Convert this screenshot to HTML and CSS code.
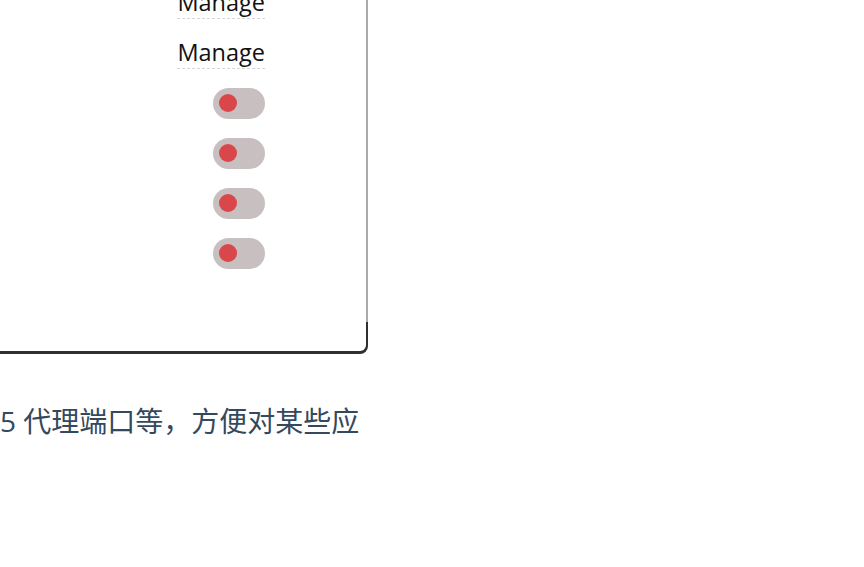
FILE: index.html
```html
<!DOCTYPE html>
<html lang="zh">
<head>
<meta charset="utf-8">
<link rel="stylesheet" href="styles.css">
</head>
<body>
<div class="page">
  <div class="frame">
    <div class="panel">
      <ul class="rows">
        <li class="row"><span class="manage">Manage</span></li>
        <li class="row"><span class="manage">Manage</span></li>
        <li class="row"><span class="toggle"><span class="knob"></span></span></li>
        <li class="row"><span class="toggle"><span class="knob"></span></span></li>
        <li class="row"><span class="toggle"><span class="knob"></span></span></li>
        <li class="row"><span class="toggle"><span class="knob"></span></span></li>
      </ul>
    </div>
  </div>
  <p class="text">5 代理端口等，方便对某些应</p>
</div>
</body>
</html>
```
FILE: styles.css
```css
html, body {
  margin: 0;
  padding: 0;
  background: #fff;
}
.page {
  width: 864px;
  height: 567px;
  overflow: hidden;
}
.frame {
  width: 368px;
  height: 354px;
  box-sizing: border-box;
  padding: 0 2px 3px 0;
  background: linear-gradient(to bottom, #aaaaaa 0, #aaaaaa 322px, #303030 322px);
  border-bottom-right-radius: 8px;
}
.panel {
  height: 100%;
  background: #fff;
  border-bottom-right-radius: 6px;
  overflow: hidden;
}
.rows {
  list-style: none;
  margin: -22px 0 0 0;
  padding: 0 101px 0 0;
  display: flex;
  flex-direction: column;
  align-items: flex-end;
}
.row {
  height: 50px;
  display: flex;
  align-items: center;
}
.manage {
  font-family: "Open Sans", "Noto Sans", sans-serif;
  font-size: 23.5px;
  line-height: 31px;
  color: #111;
  border-bottom: 1px dashed #d6d6d6;
}
.toggle {
  width: 52px;
  height: 31px;
  border-radius: 16px;
  background: #c8bfc0;
  display: flex;
  align-items: center;
  padding-left: 6px;
  box-sizing: border-box;
}
.knob {
  width: 18px;
  height: 18px;
  border-radius: 50%;
  background: #d9474b;
}
.text {
  margin: 47px 0 0 0;
  font-family: "Open Sans", "Noto Sans CJK SC", sans-serif;
  font-size: 28px;
  line-height: 40px;
  color: #34495e;
  white-space: nowrap;
}
```
